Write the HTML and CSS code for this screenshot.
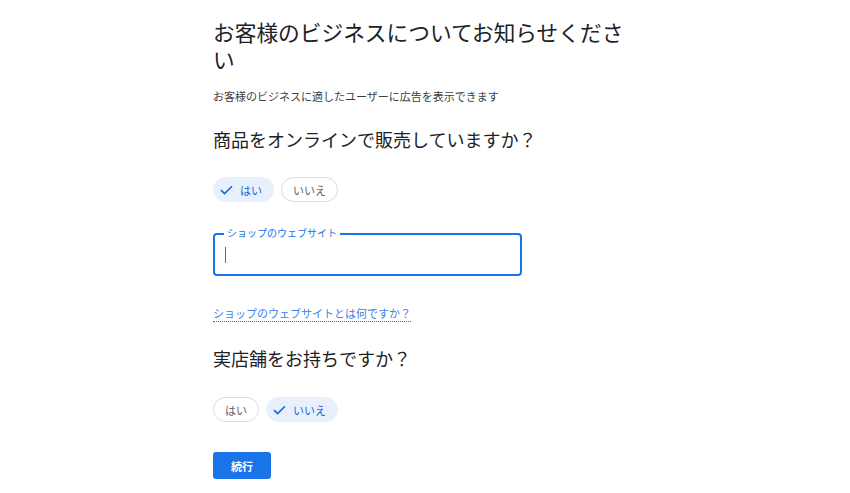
FILE: index.html
```html
<!DOCTYPE html>
<html lang="ja">
<head>
<meta charset="utf-8">
<link rel="stylesheet" href="styles.css">
</head>
<body>
<main class="page">
  <h1 class="title">お客様のビジネスについてお知らせください</h1>
  <p class="subtitle">お客様のビジネスに適したユーザーに広告を表示できます</p>

  <h2 class="question q1">商品をオンラインで販売していますか？</h2>
  <div class="chips">
    <button class="chip selected"><svg class="check" viewBox="0 0 13 10"><path d="M1 5.2l3.6 3.4L12 1.2" fill="none" stroke="currentColor" stroke-width="1.6"/></svg>はい</button>
    <button class="chip">いいえ</button>
  </div>

  <div class="field">
    <span class="field-label">ショップのウェブサイト</span>
    <span class="caret"></span>
  </div>

  <a class="help-link" href="#">ショップのウェブサイトとは何ですか？</a>

  <h2 class="question q2">実店舗をお持ちですか？</h2>
  <div class="chips">
    <button class="chip">はい</button>
    <button class="chip selected"><svg class="check" viewBox="0 0 13 10"><path d="M1 5.2l3.6 3.4L12 1.2" fill="none" stroke="currentColor" stroke-width="1.6"/></svg>いいえ</button>
  </div>

  <button class="primary">続行</button>
</main>
</body>
</html>
```

FILE: styles.css
```css
* { box-sizing: border-box; }
html, body { margin: 0; padding: 0; background: #fff; }
body {
  font-family: "Noto Sans CJK JP", "Noto Sans", sans-serif;
  color: #202124;
}
.page {
  width: 424px;
  margin: 0 auto;
  padding-top: 18px;
  display: flex;
  flex-direction: column;
  align-items: flex-start;
}
.title {
  margin: 0;
  font-size: 21.7px;
  line-height: 27px;
  font-weight: 400;
  color: #202124;
}
.subtitle {
  margin: 16px 0 0;
  font-size: 11px;
  line-height: 16px;
  color: #3c4043;
}
.question {
  margin: 0;
  font-size: 18px;
  line-height: 24px;
  font-weight: 400;
  color: #202124;
}
.q1 { margin-top: 23px; }
.q2 { margin-top: 24px; }
.chips {
  display: flex;
  gap: 7px;
  margin-top: 26px;
}
.q2 + .chips { margin-top: 27px; }
.chip {
  height: 25px;
  padding: 0 11px;
  border: 1px solid #dadce0;
  border-radius: 13px;
  background: #fff;
  color: #5f6368;
  font-family: inherit;
  font-size: 11px;
  display: flex;
  align-items: center;
  cursor: pointer;
}
.chip.selected {
  background: #e8f0fe;
  border-color: #e8f0fe;
  color: #1967d2;
  padding-left: 6px;
}
.check {
  width: 13px;
  height: 10px;
  margin-right: 7px;
}
.field {
  position: relative;
  margin-top: 31px;
  width: 309px;
  height: 43px;
  border: 2px solid #1a73e8;
  border-radius: 4px;
  display: flex;
  align-items: center;
  padding-left: 10px;
}
.field-label {
  position: absolute;
  left: 9px;
  top: -9px;
  padding: 0 3px;
  background: #fff;
  font-size: 10px;
  line-height: 14px;
  color: #1a73e8;
}
.caret {
  width: 1px;
  height: 16px;
  background: #1a73e8;
}
.help-link {
  margin-top: 29px;
  font-size: 11px;
  line-height: 16px;
  color: #3b82ec;
  text-decoration: none;
  border-bottom: 1px dotted #1a73e8;
}
.primary {
  margin-top: 30px;
  width: 58px;
  height: 27px;
  border: none;
  border-radius: 3px;
  background: #1a73e8;
  color: #fff;
  font-family: inherit;
  font-size: 11px;
  font-weight: 700;
  cursor: pointer;
}
```
